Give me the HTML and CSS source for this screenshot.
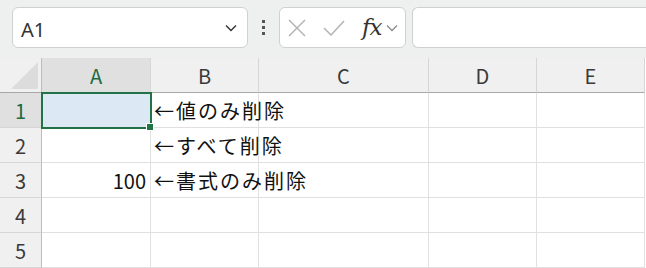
FILE: index.html
```html
<!DOCTYPE html>
<html lang="ja">
<head>
<meta charset="utf-8">
<title>Sheet</title>
<link rel="stylesheet" href="styles.css">
</head>
<body>
<div class="toolbar">
  <div class="namebox">
    <span class="name">A1</span>
    <svg class="chev" width="12" height="8" viewBox="0 0 12 8"><path d="M1 1.5 L6 6.5 L11 1.5" fill="none" stroke="#333" stroke-width="1.4"/></svg>
  </div>
  <div class="dots"><span></span><span></span><span></span></div>
  <div class="fgroup">
    <svg class="ico" width="18" height="18" viewBox="0 0 18 18"><path d="M1 1 L17 17 M17 1 L1 17" stroke="#b4b4b4" stroke-width="1.5" fill="none"/></svg>
    <svg class="ico" width="22" height="16" viewBox="0 0 22 16"><path d="M1 8 L8 15 L21 1" stroke="#b4b4b4" stroke-width="1.5" fill="none"/></svg>
    <span class="fx">fx</span>
    <svg class="chev2" width="12" height="8" viewBox="0 0 12 8"><path d="M1 1.5 L6 6.5 L11 1.5" fill="none" stroke="#8a8a8a" stroke-width="1.3"/></svg>
  </div>
  <div class="finput"></div>
</div>
<div class="sheet">
  <div class="corner"><div class="tri"></div></div>
  <div class="ch sel">A</div>
  <div class="ch">B</div>
  <div class="ch">C</div>
  <div class="ch">D</div>
  <div class="ch">E</div>

  <div class="rh sel">1</div>
  <div class="c active"><span class="handle"></span></div>
  <div class="c"><span class="txt">←値のみ削除</span></div>
  <div class="c"></div>
  <div class="c"></div>
  <div class="c"></div>

  <div class="rh">2</div>
  <div class="c"></div>
  <div class="c"><span class="txt">←すべて削除</span></div>
  <div class="c"></div>
  <div class="c"></div>
  <div class="c"></div>

  <div class="rh">3</div>
  <div class="c num">100</div>
  <div class="c"><span class="txt">←書式のみ削除</span></div>
  <div class="c"></div>
  <div class="c"></div>
  <div class="c"></div>

  <div class="rh">4</div>
  <div class="c"></div>
  <div class="c"></div>
  <div class="c"></div>
  <div class="c"></div>
  <div class="c"></div>

  <div class="rh">5</div>
  <div class="c"></div>
  <div class="c"></div>
  <div class="c"></div>
  <div class="c"></div>
  <div class="c"></div>
</div>
</body>
</html>
```
FILE: styles.css
```css
html, body {
  margin: 0;
  padding: 0;
  width: 646px;
  height: 268px;
  overflow: hidden;
  background: #ffffff;
  font-family: "Noto Sans CJK JP", "Noto Sans", sans-serif;
}
.toolbar {
  height: 58px;
  background: #eeefef;
  display: flex;
  align-items: flex-start;
  padding-top: 7px;
  box-sizing: border-box;
  padding-left: 12px;
}
.namebox {
  width: 236px;
  height: 41px;
  box-sizing: border-box;
  background: #fff;
  border: 1px solid #d0d0d0;
  border-radius: 6px;
  display: flex;
  align-items: center;
  justify-content: space-between;
  padding: 0 10px 0 8px;
}
.name {
  font-family: "Noto Sans", sans-serif;
  font-size: 20px;
  color: #333;
  padding-top: 4px;
}
.dots {
  width: 31px;
  height: 41px;
  display: flex;
  flex-direction: column;
  align-items: center;
  justify-content: center;
  gap: 3px;
}
.dots span {
  width: 3px;
  height: 3px;
  background: #555;
}
.fgroup {
  width: 127px;
  height: 41px;
  box-sizing: border-box;
  background: #fff;
  border: 1px solid #d0d0d0;
  border-radius: 6px;
  display: flex;
  align-items: center;
  padding-left: 8px;
}
.ico:first-child { margin-right: 17px; }
.fx {
  font-family: "DejaVu Serif", "Liberation Serif", serif;
  font-style: italic;
  font-weight: normal;
  font-size: 23px;
  color: #333;
  margin-left: 17px;
  letter-spacing: -1px;
  padding-bottom: 2px;
}
.chev2 { margin-left: 5px; }
.finput {
  margin-left: 6px;
  flex: 1;
  height: 41px;
  box-sizing: border-box;
  background: #fff;
  border: 1px solid #d0d0d0;
  border-right: none;
  border-radius: 6px 0 0 6px;
}
.sheet {
  display: grid;
  grid-template-columns: 42px 109px 108px 170px 108px 108px;
  grid-template-rows: 35px repeat(5, 35px);
}
.corner {
  background: #f0f0f0;
  border-right: 1px solid #bdbdbd;
  border-bottom: 1px solid #a8a8a8;
  box-sizing: border-box;
  position: relative;
}
.tri {
  position: absolute;
  right: 3px;
  bottom: 3px;
  width: 27px;
  height: 27px;
  background: #dcdcdc;
  clip-path: polygon(100% 0, 100% 100%, 0 100%);
}
.ch {
  background: #f0f0f0;
  border-right: 1px solid #d6d6d6;
  border-bottom: 1px solid #a8a8a8;
  box-sizing: border-box;
  display: flex;
  align-items: center;
  justify-content: center;
  font-size: 20px;
  color: #3a3a3a;
}
.rh {
  background: #f0f0f0;
  border-right: 1px solid #bdbdbd;
  border-bottom: 1px solid #d6d6d6;
  box-sizing: border-box;
  display: flex;
  align-items: center;
  justify-content: center;
  font-size: 20px;
  color: #3a3a3a;
}
.sel {
  background: #e0e0e0;
  color: #1d6b40;
}
.c {
  border-right: 1px solid #e0e0e0;
  border-bottom: 1px solid #e0e0e0;
  box-sizing: border-box;
  display: flex;
  align-items: center;
  font-size: 20px;
  color: #111;
  white-space: nowrap;
  position: relative;
}
.txt {
  padding-left: 3px;
  letter-spacing: 2px;
  position: relative;
  z-index: 1;
}
.num {
  justify-content: flex-end;
  padding-right: 4px;
}
.active {
  background: #dce9f5;
  outline: 2px solid #217346;
  outline-offset: -1px;
  z-index: 2;
}
.handle {
  position: absolute;
  right: -4px;
  bottom: -4px;
  width: 6px;
  height: 6px;
  background: #217346;
  border: 1px solid #fff;
}
```
